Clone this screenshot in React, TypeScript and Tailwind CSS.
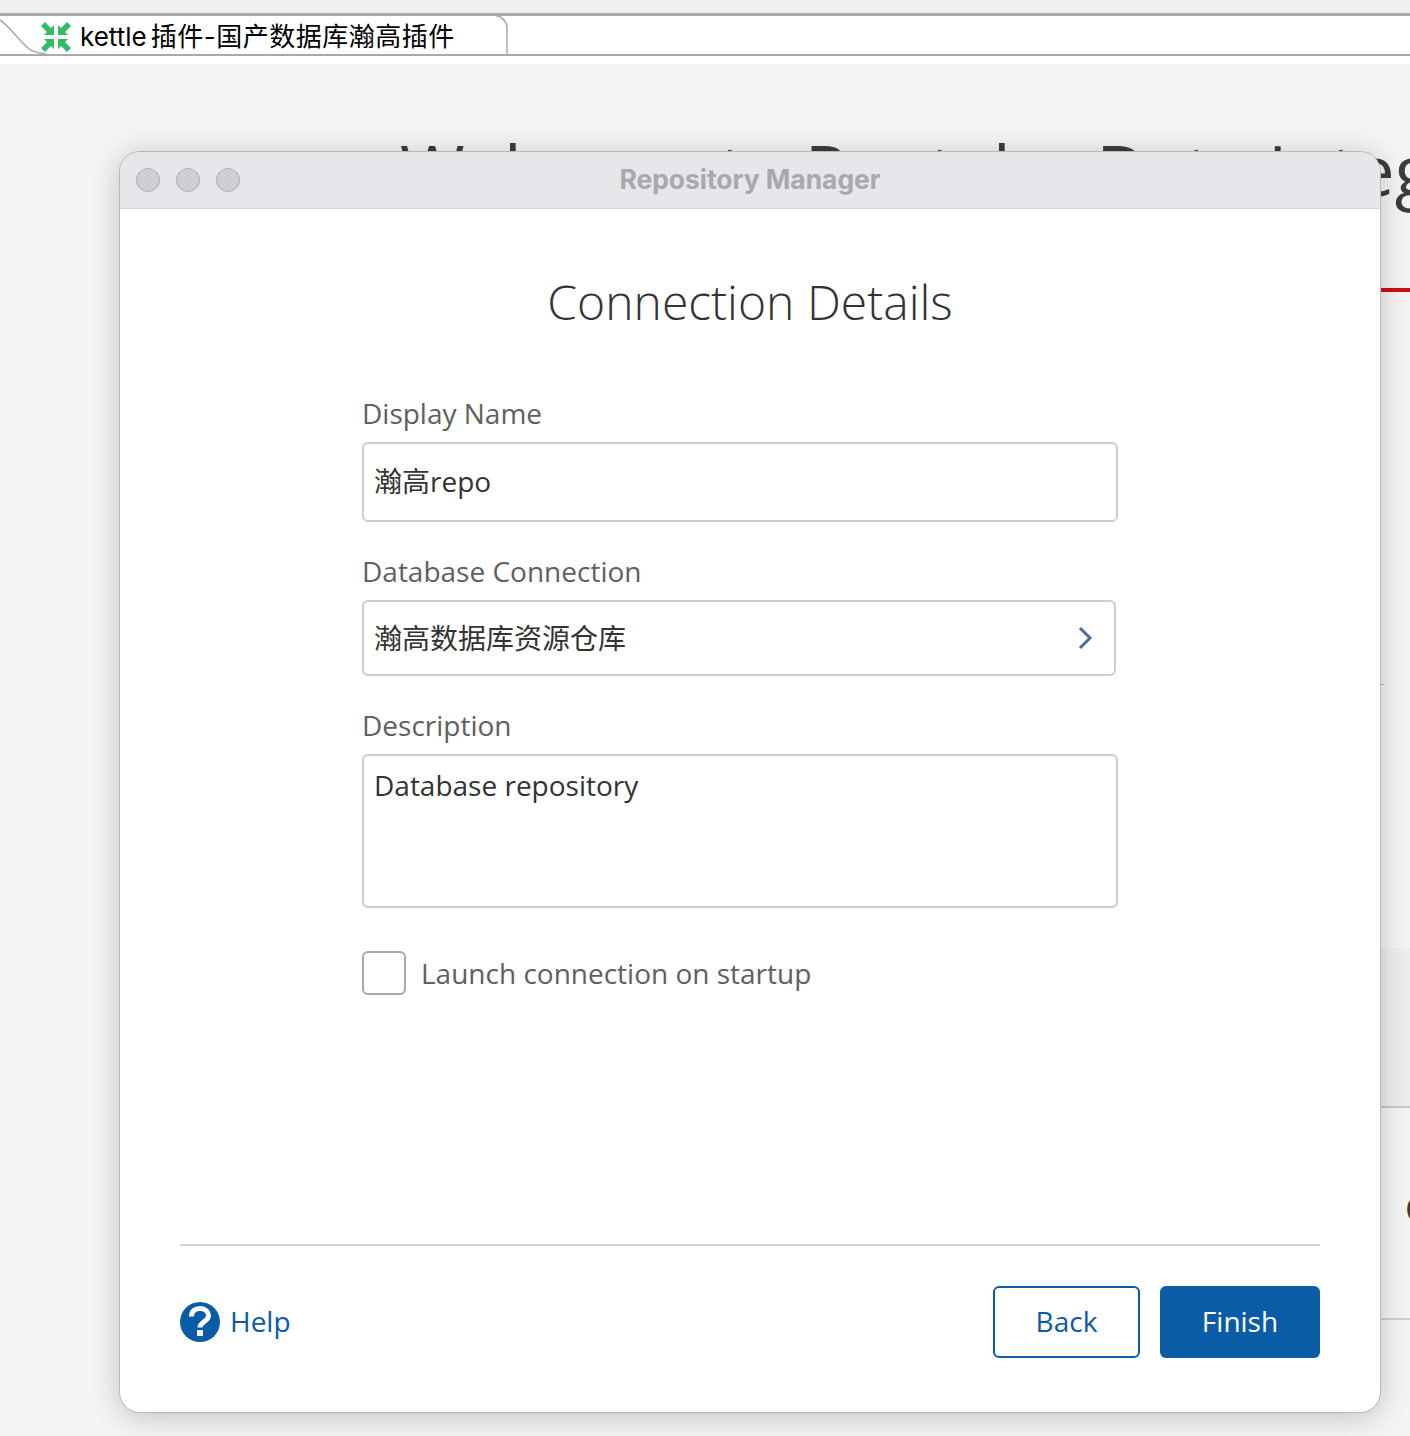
const openSans = "font-['Open_Sans','Noto_Sans_CJK_SC',sans-serif]"

function KettleIcon() {
  return (
    <svg width="32" height="32" viewBox="0 0 32 32" className="shrink-0">
      <g fill="#35ba68">
        <path d="M14 14L4 14L7 11L1 5L5 1L11 7L14 4Z" />
        <path d="M18 14L28 14L25 11L31 5L27 1L21 7L18 4Z" />
        <path d="M14 18L4 18L7 21L1 27L5 31L11 25L14 28Z" />
        <path d="M18 18L28 18L25 21L31 27L27 31L21 25L18 28Z" />
      </g>
    </svg>
  )
}

function HelpIcon() {
  return (
    <svg width="40" height="40" viewBox="0 0 40 40" className="shrink-0">
      <circle cx="20" cy="20" r="20" fill="#0b5ca6" />
      <path d="M11.5 14.5C11.5 9 15 6.5 20 6.5C25.5 6.5 28.5 10 28.5 14C28.5 19 20 20 20 25.5" fill="none" stroke="white" strokeWidth="5" />
      <rect x="17" y="28" width="6" height="6" fill="white" />
    </svg>
  )
}

function ChevronIcon() {
  return (
    <svg width="16" height="26" viewBox="0 0 16 26" fill="none" className="shrink-0">
      <path d="M3 3L13 13L3 23" stroke="#4a6f94" strokeWidth="3" />
    </svg>
  )
}

function TabBar() {
  return (
    <div className="h-[43px] border-t-[3px] border-b-2 border-[#a9a9a9] bg-white relative">
      <svg width="60" height="40" viewBox="0 0 60 40" className="absolute left-0 top-0" fill="none">
        <path d="M0 4C8 9 18 23 28 32C32 36 38 37 46 38" stroke="#a9a9a9" strokeWidth="1.5" />
      </svg>
      <svg width="14" height="40" viewBox="0 0 14 40" className="absolute left-[496px] top-0" fill="none">
        <path d="M0 0L3 0C8 3 11 7 11 12L11 38" stroke="#a9a9a9" strokeWidth="1.5" />
      </svg>
      <div className="flex items-center h-full pl-[40px] pt-[3px] gap-[8px]">
        <KettleIcon />
        <span className="font-['Inter','Noto_Sans_CJK_SC',sans-serif] text-[26px] leading-none text-black whitespace-nowrap">
          kettle<span className="ml-[4px] tracking-[0.5px]">插件-国产数据库瀚高插件</span>
        </span>
      </div>
    </div>
  )
}

function BackgroundPage() {
  return (
    <div className="h-[1372px] bg-[#f4f4f4] overflow-hidden pl-[400px]">
      <h1 className={`${openSans} pt-[55px] h-[224px] text-[70px] leading-[100px] font-normal text-[#3c3c3c] whitespace-nowrap`}>
        Welcome to Pentaho Data Integration
      </h1>
      <div className="h-[4px] bg-[#c8101a]" />
      <div className="mt-[392px] mr-[26px] h-px bg-[#b5b5b5]" />
      <div className="mt-[263px] h-[160px] bg-[#eeeeee] border-b-2 border-[#c8c8c8]" />
      <div className="h-[212px] border-b-2 border-[#cfcfcf] flex items-center pl-[1005px] pb-[8px]">
        <span className={`${openSans} text-[36px] leading-none text-[#3c3c3c] whitespace-nowrap`}>Connect</span>
      </div>
    </div>
  )
}

function Field({ label, children }: { label: string; children: React.ReactNode }) {
  return (
    <div>
      <label className="block text-[28px] leading-[38px] text-[#606060]">{label}</label>
      {children}
    </div>
  )
}

function Dialog() {
  return (
    <div className={`${openSans} absolute left-[120px] top-[152px] w-[1260px] h-[1260px] rounded-[20px] bg-white overflow-hidden flex flex-col shadow-[0_0_0_1px_#b9b9b9,0_4px_30px_rgba(0,0,0,0.22)]`}>
      <div className="h-[57px] shrink-0 bg-[#e7e6ea] border-b border-[#d8d8d8] relative flex items-center px-[16px] gap-[16px]">
        <span className="w-[24px] h-[24px] rounded-full bg-[#d0ced3] border border-[#aeacb0]" />
        <span className="w-[24px] h-[24px] rounded-full bg-[#d0ced3] border border-[#aeacb0]" />
        <span className="w-[24px] h-[24px] rounded-full bg-[#d0ced3] border border-[#aeacb0]" />
        <span className="absolute inset-x-0 top-[9px] text-center font-['Inter',sans-serif] text-[26.4px] leading-[36px] font-bold text-[#a9a8ac]">
          Repository Manager
        </span>
      </div>

      <div className="flex-1 flex flex-col px-[60px]">
        <h2 className="text-center text-[48px] leading-[64px] font-light text-[#333333] mt-[61px]">
          Connection Details
        </h2>

        <div className="ml-[182px] w-[756px] mt-[60px] flex flex-col">
          <Field label="Display Name">
            <div className="mt-[10px] h-[80px] border-2 border-[#cccccc] rounded-[6px] px-[10px] pb-[2px] flex items-center text-[28px] text-[#333333]">
              瀚高repo
            </div>
          </Field>
          <div className="mt-[30px]">
            <Field label="Database Connection">
              <div className="mt-[10px] h-[76px] w-[754px] border-2 border-[#cccccc] rounded-[6px] pl-[10px] pr-[21px] flex items-center justify-between text-[28px] text-[#333333]">
                <span>瀚高数据库资源仓库</span>
                <ChevronIcon />
              </div>
            </Field>
          </div>
          <div className="mt-[30px]">
            <Field label="Description">
              <div className="mt-[10px] h-[154px] border-2 border-[#cccccc] rounded-[6px] px-[10px] pt-[10px] text-[28px] leading-[38px] text-[#333333]">
                Database repository
              </div>
            </Field>
          </div>
          <div className="mt-[43px] flex items-center gap-[15px]">
            <span className="w-[44px] h-[44px] border-2 border-[#a8a8a8] rounded-[6px]" />
            <span className="text-[28px] text-[#606060]">Launch connection on startup</span>
          </div>
        </div>

        <div className="mt-auto border-t-2 border-[#d2d2d2] pt-[40px] pb-[54px] flex items-center justify-between">
          <div className="flex items-center gap-[10px]">
            <HelpIcon />
            <span className="text-[28px] leading-[38px] pb-[2px] text-[#0b5ca6]">Help</span>
          </div>
          <div className="flex gap-[20px]">
            <button className="w-[147px] h-[72px] border-2 border-[#0b5ca6] rounded-[6px] pb-[2px] text-[28px] text-[#0b5ca6]">Back</button>
            <button className="w-[160px] h-[72px] bg-[#0b5ca6] rounded-[6px] pb-[2px] text-[28px] text-white">Finish</button>
          </div>
        </div>
      </div>
    </div>
  )
}

export default function App() {
  return (
    <div className="relative h-[1436px] w-[1410px] overflow-hidden bg-white">
      <div className="h-[13px] bg-[#efefef]" />
      <TabBar />
      <div className="h-[8px] bg-white" />
      <BackgroundPage />
      <Dialog />
    </div>
  )
}
